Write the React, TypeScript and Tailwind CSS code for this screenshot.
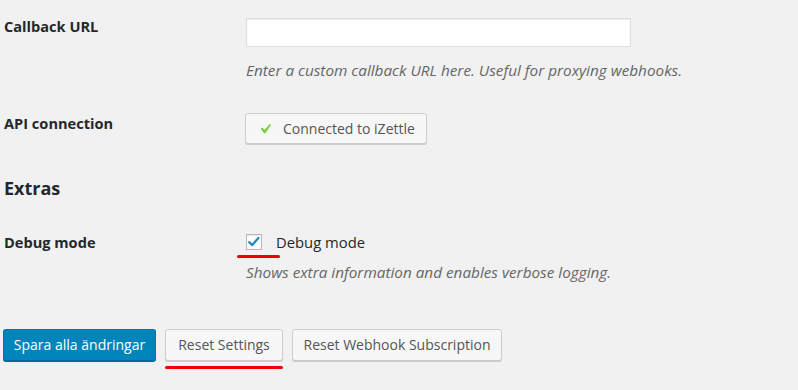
import { FC } from 'react';

const font = { fontFamily: '"Open Sans", "Noto Sans", sans-serif' };

const CheckIcon: FC<{ className?: string }> = ({ className }) => (
  <svg viewBox="0 0 20 20" className={className} fill="currentColor">
    <path d="M14.83 4.89l1.34.94-5.81 8.38H9.02L5.78 9.67l1.34-1.25 2.57 2.4z" />
  </svg>
);

const App: FC = () => {
  return (
    <div
      className="min-h-screen w-[798px] h-[390px] bg-[#f1f1f1] text-[14px] text-[#23282d] overflow-hidden"
      style={font}
    >
      {/* Callback URL */}
      <div className="flex pt-4">
        <div className="w-[246px] pl-1 leading-5 font-bold text-[14.6px]">Callback URL</div>
        <div className="flex flex-col">
          <input
            type="text"
            className="mt-[2px] h-[29px] w-[385px] bg-white border border-[#dddddd] shadow-[inset_0_1px_2px_rgba(0,0,0,0.07)] outline-none"
          />
          <p className="mt-[13px] leading-5 italic text-[15.3px] text-[#666]">
            Enter a custom callback URL here. Useful for proxying webhooks.
          </p>
        </div>
      </div>

      {/* API connection */}
      <div className="flex mt-[33px]">
        <div className="w-[246px] pl-1 leading-5 font-bold text-[14.6px]">API connection</div>
        <button className="-ml-px flex items-center h-[31px] w-[182px] pl-[9px] bg-[#f7f7f7] border border-[#cccccc] rounded-[3px] shadow-[0_1px_0_#cccccc] text-[#555]">
          <CheckIcon className="w-5 h-5 text-[#7ad03a]" />
          <span className="ml-[8px] leading-5">Connected to iZettle</span>
        </button>
      </div>

      {/* Extras */}
      <h2 className="mt-8 pl-1 text-[18px] leading-6 font-bold">Extras</h2>

      {/* Debug mode */}
      <div className="flex mt-8">
        <div className="w-[246px] pl-1 leading-5 font-bold text-[14.6px]">Debug mode</div>
        <div className="flex flex-col">
          <label className="relative flex items-center h-5">
            <span className="flex items-center justify-center w-4 h-4 bg-white border border-[#b4b9be] shadow-[inset_0_1px_2px_rgba(0,0,0,0.1)]">
              <svg viewBox="0 0 16 16" className="w-[14px] h-[14px]" fill="none">
                <path
                  d="M2.5 8.2 L6 11.5 L13 3.5"
                  stroke="#1e8cbe"
                  strokeWidth="2.6"
                  strokeLinecap="round"
                  strokeLinejoin="round"
                />
              </svg>
            </span>
            <span className="ml-[14px] leading-5 text-[14.8px]">Debug mode</span>
            <span className="absolute left-[-9px] top-[23px] w-[43px] h-[3px] rounded-full bg-[#ee0000]" />
          </label>
          <p className="mt-[10px] leading-5 italic text-[15.3px] text-[#666]">
            Shows extra information and enables verbose logging.
          </p>
        </div>
      </div>

      {/* Buttons */}
      <div className="flex mt-[47px] pl-[3px] gap-[9px]">
        <button className="h-[32px] w-[153px] bg-[#0085ba] border border-[#0073aa] border-b-[#006799] rounded-[3px] shadow-[0_1px_0_#006799] text-white leading-5">
          Spara alla ändringar
        </button>
        <div className="relative">
          <button className="h-[32px] w-[118px] bg-[#f7f7f7] border border-[#cccccc] rounded-[3px] shadow-[0_1px_0_#cccccc] text-[#555] leading-5">
            Reset Settings
          </button>
          <span className="absolute left-0 top-[37px] w-[118px] h-[3px] rounded-full bg-[#ee0000]" />
        </div>
        <button className="h-[32px] w-[210px] bg-[#f7f7f7] border border-[#cccccc] rounded-[3px] shadow-[0_1px_0_#cccccc] text-[#555] leading-5">
          Reset Webhook Subscription
        </button>
      </div>
    </div>
  );
};

export default App;
